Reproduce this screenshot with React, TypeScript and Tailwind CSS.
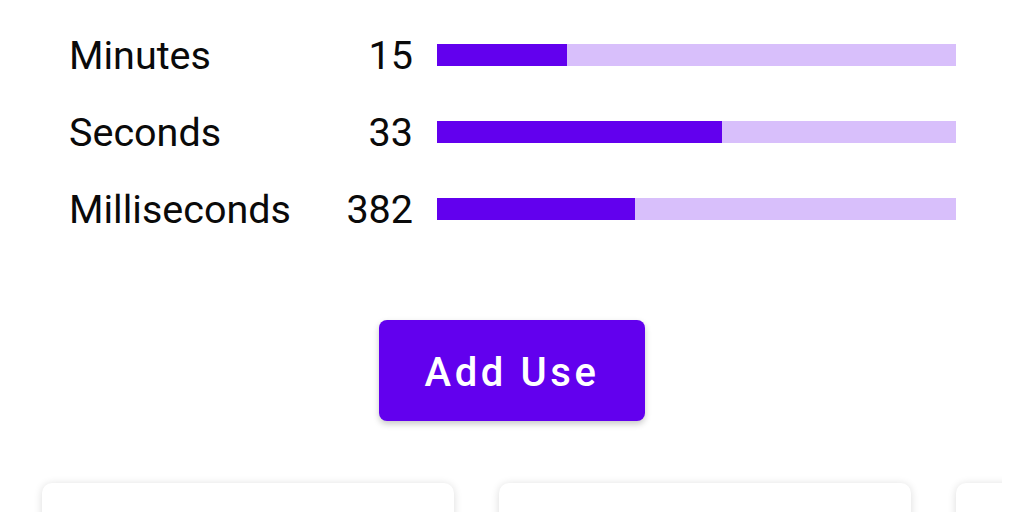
export default function App() {
  const rows = [
    { label: "Minutes", value: 15, max: 60 },
    { label: "Seconds", value: 33, max: 60 },
    { label: "Milliseconds", value: 382, max: 1000 },
  ];

  return (
    <div className="w-[1024px] h-[512px] overflow-hidden bg-white font-['Roboto',sans-serif] text-[#0a0a0a]">
      {/* time breakdown */}
      <div className="pt-[16px] pl-[69px]">
        {rows.map((row) => (
          <div key={row.label} className="flex items-center h-[77px]">
            <div className="w-[260px] pt-[3px] text-[39.5px]">{row.label}</div>
            <div className="w-[84px] pt-[3px] text-right text-[39.5px]">{row.value}</div>
            <div className="ml-6 w-[519px] h-[22px] bg-[#d8bffb]">
              <div
                className="h-full bg-[#6200ee]"
                style={{ width: `${(row.value / row.max) * 100}%` }}
              />
            </div>
          </div>
        ))}
      </div>

      <div className="flex justify-center mt-[73px]">
        <button className="w-[266px] h-[101px] pt-[5px] rounded-lg bg-[#6200ee] text-white text-[40px] font-medium tracking-[0.09em] shadow-[0_3px_6px_rgba(0,0,0,0.22)]">
          Add Use
        </button>
      </div>

      {/* cards */}
      <div className="w-[1002px] overflow-hidden mt-[50px] pt-[12px] pl-[42px]">
        <div className="flex gap-[45px]">
          <div className="w-[412px] h-[120px] shrink-0 rounded-[10px] bg-white shadow-[0_1px_8px_rgba(0,0,0,0.14)]" />
          <div className="w-[412px] h-[120px] shrink-0 rounded-[10px] bg-white shadow-[0_1px_8px_rgba(0,0,0,0.14)]" />
          <div className="w-[412px] h-[120px] shrink-0 rounded-[10px] bg-white shadow-[0_1px_8px_rgba(0,0,0,0.14)]" />
        </div>
      </div>
    </div>
  );
}
